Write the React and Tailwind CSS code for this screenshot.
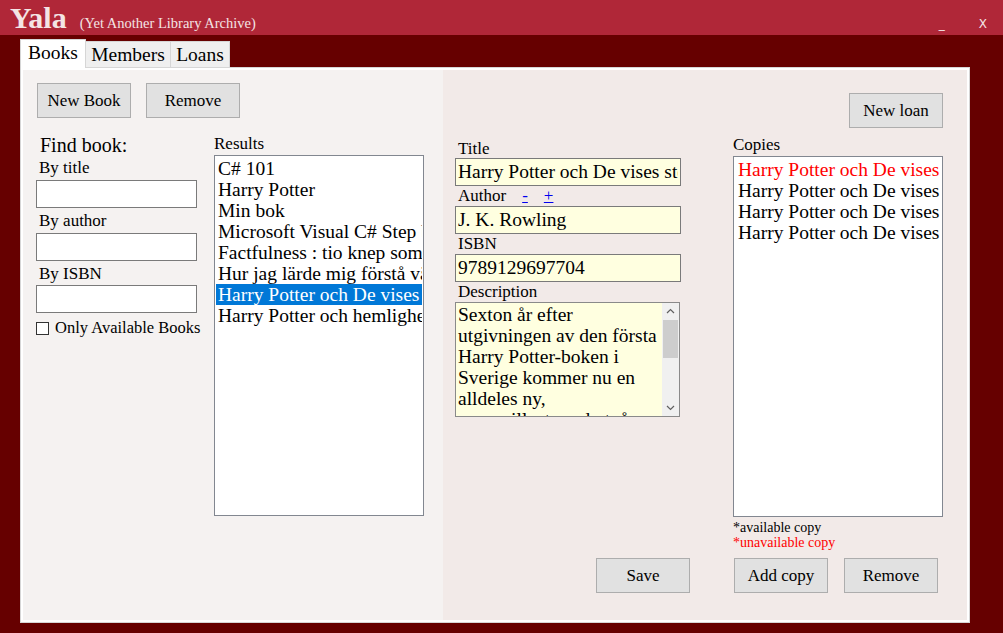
import React from 'react';

const results = [
  'C# 101',
  'Harry Potter',
  'Min bok',
  'Microsoft Visual C# Step by Step',
  'Factfulness : tio knep som hjälper dig förstå världen',
  'Hur jag lärde mig förstå världen',
  'Harry Potter och De vises sten',
  'Harry Potter och hemligheternas kammare',
];

const copies = [
  { title: 'Harry Potter och De vises sten', available: false },
  { title: 'Harry Potter och De vises sten', available: true },
  { title: 'Harry Potter och De vises sten', available: true },
  { title: 'Harry Potter och De vises sten', available: true },
];

const description = [
  'Sexton år efter',
  'utgivningen av den första',
  'Harry Potter-boken i',
  'Sverige kommer nu en',
  'alldeles ny,',
  'genomillustrerad utgåva',
];

function Button({ children, className = '' }) {
  return (
    <button
      className={`h-[35px] w-[94px] shrink-0 border border-[#adadad] bg-[#e1e1e1] text-[17px] text-black ${className}`}
    >
      {children}
    </button>
  );
}

function Field({ value, className = '' }) {
  return (
    <input
      readOnly
      value={value}
      className={`h-[28px] w-full border border-[#7a7a7a] px-[2px] text-[19.5px] leading-[26px] text-black outline-none ${className}`}
    />
  );
}

export default function App() {
  return (
    <div className="flex h-[633px] w-[1003px] flex-col overflow-hidden bg-[#660000] font-['Liberation_Serif',serif] text-black">
      {/* Title bar */}
      <div className="flex h-[35px] shrink-0 items-baseline bg-[#b02738] pl-[10px] pt-[3px] text-[#f4e4e4]">
        <span className="text-[30px] font-bold leading-[29px]">Yala</span>
        <span className="ml-[13px] text-[14.5px]">(Yet Another Library Archive)</span>
        <span className="ml-auto font-['DejaVu_Sans',sans-serif] text-[12px]">_</span>
        <span className="ml-[34px] mr-[16px] font-['DejaVu_Sans',sans-serif] text-[12px]">X</span>
      </div>

      <div className="pl-[20px] pt-[4px]">
        {/* Tabs */}
        <div className="relative z-10 -mb-px flex h-[29px] items-end">
          <div className="flex h-[29px] w-[66px] justify-center border border-b-0 border-[#d6d6d6] bg-white pt-[1px] text-[19.5px] leading-[24px]">
            Books
          </div>
          <div className="flex h-[27px] w-[85px] justify-center border border-l-0 border-[#d6d6d6] bg-[#efefef] pt-[1px] text-[19.5px] leading-[24px]">
            Members
          </div>
          <div className="flex h-[27px] w-[59px] justify-center border border-l-0 border-[#d6d6d6] bg-[#efefef] pt-[1px] text-[19.5px] leading-[24px]">
            Loans
          </div>
        </div>

        {/* Panel */}
        <div className="h-[556px] w-[950px] border border-[#d6d6d6] bg-white p-[2px]">
          <div className="flex h-full">
            {/* Left: search */}
            <div className="w-[420px] bg-[#f5f2f1] pl-[14px] pt-[13px]">
              <div className="flex gap-[15px]">
                <Button>New Book</Button>
                <Button>Remove</Button>
              </div>

              <div className="mt-[15px] flex">
                <div className="-ml-px w-[168px]">
                  <div className="pl-[4px] text-[20px] leading-[24px]">Find book:</div>
                  <div className="pl-[3px] text-[17px] leading-[21px]">By title</div>
                  <Field value="" className="mt-[2px] w-[161px]! bg-white" />
                  <div className="mt-[2px] pl-[3px] text-[17px] leading-[21px]">By author</div>
                  <Field value="" className="mt-[2px] w-[161px]! bg-white" />
                  <div className="mt-[2px] pl-[3px] text-[17px] leading-[21px]">By ISBN</div>
                  <Field value="" className="mt-[1px] w-[161px]! bg-white" />
                  <div className="mt-[5px] flex items-center whitespace-nowrap">
                    <div className="h-[13px] w-[13px] shrink-0 border border-[#333] bg-white" />
                    <span className="ml-[6px] text-[16.5px] leading-[20px]">Only Available Books</span>
                  </div>
                </div>

                <div className="ml-[10px] w-[210px]">
                  <div className="text-[17px] leading-[22px]">Results</div>
                  <div className="h-[361px] overflow-hidden border border-[#828790] bg-white p-px pt-[2px]">
                    {results.map((r, i) => (
                      <div
                        key={i}
                        className={`overflow-hidden whitespace-nowrap pl-[2px] text-[19.5px] leading-[21px] ${
                          i === 6 ? 'bg-[#0078d7] text-white' : ''
                        }`}
                      >
                        {r}
                      </div>
                    ))}
                  </div>
                </div>
              </div>
            </div>

            {/* Right: details */}
            <div className="flex flex-1 flex-col bg-[#f2eae8]">
              <div className="flex h-[488px]">
                <div className="ml-[12px] w-[226px] pt-[69px]">
                  <div className="pl-[3px] text-[17px] leading-[19px]">Title</div>
                  <Field value="Harry Potter och De vises sten" className="bg-[#ffffe0]" />
                  <div className="flex pl-[3px] text-[17px] leading-[20px]">
                    <span>Author</span>
                    <span className="ml-[16px] text-[#0000ee] underline">-</span>
                    <span className="ml-[16px] text-[#0000ee] underline">+</span>
                  </div>
                  <Field value="J. K. Rowling" className="bg-[#ffffe0]" />
                  <div className="pl-[3px] text-[17px] leading-[20px]">ISBN</div>
                  <Field value="9789129697704" className="bg-[#ffffe0]" />
                  <div className="pl-[3px] text-[17px] leading-[20px]">Description</div>
                  <div className="flex h-[115px] w-[225px] border border-[#8a8a8a] bg-[#ffffe0]">
                    <div className="flex-1 overflow-hidden pl-[2px] pt-[1px] text-[19.5px] leading-[21px]">
                      {description.map((l, i) => (
                        <div key={i} className="whitespace-nowrap">
                          {l}
                        </div>
                      ))}
                    </div>
                    <div className="flex w-[17px] flex-col items-center bg-[#f0f0f0]">
                      <svg width="17" height="17" viewBox="0 0 17 17" className="shrink-0">
                        <path d="M5 10 L8.5 6.5 L12 10" fill="none" stroke="#606060" strokeWidth="1.2" />
                      </svg>
                      <div className="h-[38px] w-[15px] bg-[#cdcdcd]" />
                      <div className="flex-1" />
                      <svg width="17" height="17" viewBox="0 0 17 17" className="shrink-0">
                        <path d="M5 7 L8.5 10.5 L12 7" fill="none" stroke="#606060" strokeWidth="1.2" />
                      </svg>
                    </div>
                  </div>
                </div>

                <div className="ml-[52px] flex w-[210px] flex-col pt-[23px]">
                  <Button className="self-end">New loan</Button>
                  <div className="mt-[5px] text-[17px] leading-[23px]">Copies</div>
                  <div className="h-[361px] overflow-hidden border border-[#828790] bg-white pl-[4px] pt-[2px]">
                    {copies.map((c, i) => (
                      <div
                        key={i}
                        className={`whitespace-nowrap text-[19.5px] leading-[21px] ${
                          c.available ? '' : 'text-[#ff0000]'
                        }`}
                      >
                        {c.title}
                      </div>
                    ))}
                  </div>
                  <div className="mt-[3px] text-[14px] leading-[15px]">*available copy</div>
                  <div className="text-[14px] leading-[15px] text-[#ff0000]">*unavailable copy</div>
                </div>
              </div>

              <div className="flex pl-[153px]">
                <Button>Save</Button>
                <Button className="ml-[44px]">Add copy</Button>
                <Button className="ml-[16px]">Remove</Button>
              </div>
            </div>
          </div>
        </div>
      </div>
    </div>
  );
}
